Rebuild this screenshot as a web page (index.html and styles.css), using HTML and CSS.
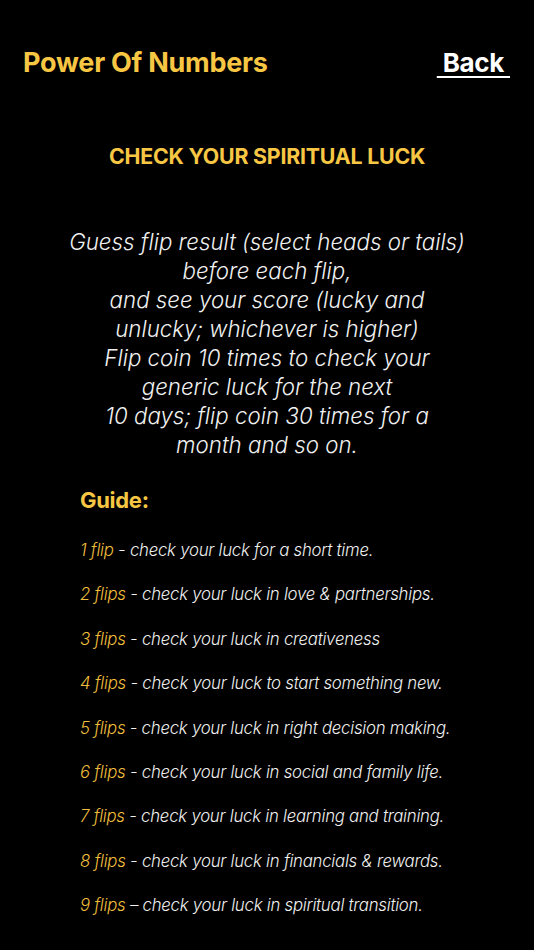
FILE: index.html
```html
<!DOCTYPE html>
<html>
<head>
<meta charset="utf-8">
<link rel="stylesheet" href="styles.css">
</head>
<body>
<div class="page">
  <header class="header">
    <div class="title">Power Of Numbers</div>
    <a class="back">&nbsp;Back&nbsp;</a>
  </header>
  <h1 class="heading">CHECK YOUR SPIRITUAL LUCK</h1>
  <p class="intro">Guess flip result (select heads or tails)<br>before each flip,<br>and see your score (lucky and<br>unlucky; whichever is higher)<br>Flip coin 10 times to check your<br>generic luck for the next<br>10 days; flip coin 30 times for a<br>month and so on.</p>
  <section class="guide">
    <h2 class="guide-title">Guide:</h2>
    <ul class="guide-list">
      <li><span class="num">1 flip</span> - check your luck for a short time.</li>
      <li><span class="num">2 flips</span> - check your luck in love &amp; partnerships.</li>
      <li><span class="num">3 flips</span> - check your luck in creativeness</li>
      <li><span class="num">4 flips</span> - check your luck to start something new.</li>
      <li><span class="num">5 flips</span> - check your luck in right decision making.</li>
      <li><span class="num">6 flips</span> - check your luck in social and family life.</li>
      <li><span class="num">7 flips</span> - check your luck in learning and training.</li>
      <li><span class="num">8 flips</span> - check your luck in financials &amp; rewards.</li>
      <li><span class="num">9 flips</span> – check your luck in spiritual transition.</li>
    </ul>
  </section>
</div>
</body>
</html>
```
FILE: styles.css
```css
html, body {
  margin: 0;
  padding: 0;
  background: #000;
}
body {
  font-family: Inter, "Liberation Sans", sans-serif;
  color: #f2f2f2;
  width: 534px;
  height: 950px;
  overflow: hidden;
}
.page {
  display: flex;
  flex-direction: column;
}
.header {
  display: flex;
  justify-content: space-between;
  align-items: baseline;
  padding: 46px 24px 0 23px;
}
.title {
  color: #f7c744;
  font-weight: 700;
  font-size: 27px;
  letter-spacing: -0.25px;
}
.back {
  color: #fff;
  font-weight: 700;
  font-size: 26px;
  text-decoration: underline;
  text-decoration-thickness: 2px;
  text-underline-offset: 4px;
  letter-spacing: -0.3px;
}
.heading {
  margin: 64px 0 0;
  text-align: center;
  color: #f7c744;
  font-size: 21.3px;
  font-weight: 700;
  letter-spacing: -0.2px;
}
.intro {
  margin: 58px 0 0;
  text-align: center;
  font-style: italic;
  font-weight: 300;
  font-size: 22.3px;
  line-height: 29px;
  color: #f0f0f0;
  letter-spacing: 0;
}
.guide {
  padding-left: 80px;
  margin-top: 28px;
}
.guide-title {
  margin: 0;
  color: #f7c744;
  font-size: 22px;
  font-weight: 700;
  letter-spacing: -0.3px;
}
.guide-list {
  list-style: none;
  margin: 15px 0 0;
  padding: 0;
}
.guide-list li {
  font-style: italic;
  font-weight: 300;
  font-size: 16.8px;
  line-height: 44.4px;
  color: #f0f0f0;
  letter-spacing: -0.25px;
  white-space: nowrap;
}
.num {
  color: #f0be3c;
}
```
